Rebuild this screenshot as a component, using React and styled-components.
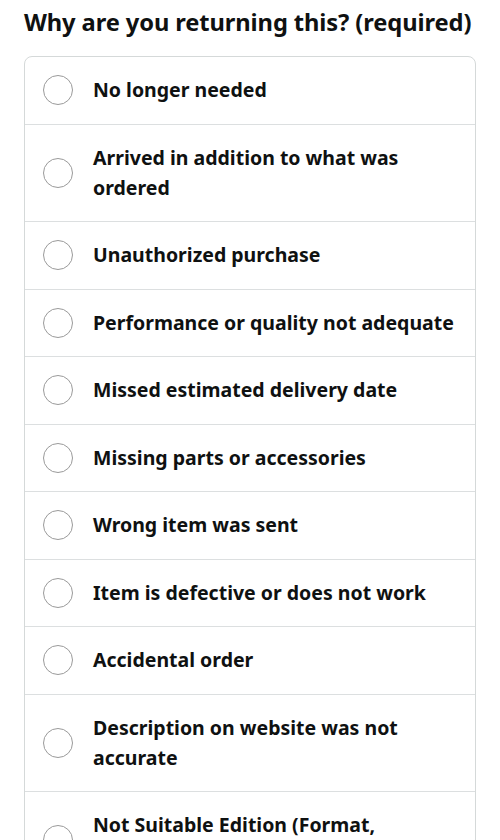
import React from 'react';
import styled, { createGlobalStyle } from 'styled-components';

const reasons = [
  'No longer needed',
  'Arrived in addition to what was ordered',
  'Unauthorized purchase',
  'Performance or quality not adequate',
  'Missed estimated delivery date',
  'Missing parts or accessories',
  'Wrong item was sent',
  'Item is defective or does not work',
  'Accidental order',
  'Description on website was not accurate',
  'Not Suitable Edition (Format, Language, etc.)',
];

const App = () => {
  return (
    <Page>
      <GlobalStyle />
      <Heading>Why are you returning this? (required)</Heading>
      <Card>
        {reasons.map(text => (
          <Row key={text}>
            <Radio />
            <Label>{text}</Label>
          </Row>
        ))}
      </Card>
    </Page>
  );
};

export default App;

const GlobalStyle = createGlobalStyle`
  body {
    margin: 0;
    background: #ffffff;
    font-family: "Noto Sans", "Open Sans", sans-serif;
    color: #0f1111;
  }
`;

const Page = styled.div`
  padding: 6px 24px 0 24px;
`;

const Heading = styled.h1`
  margin: 0 0 18px 0;
  font-size: 23.7px;
  line-height: 32px;
  font-weight: 700;
  white-space: nowrap;
  letter-spacing: -0.1px;
`;

const Card = styled.div`
  border: 1px solid #d5d9d9;
  border-radius: 8px;
  width: 452px;
  box-sizing: border-box;
  overflow: hidden;
`;

const Row = styled.div`
  display: flex;
  align-items: center;
  padding: 18.25px 16px 18.25px 18px;
  border-bottom: 1px solid #dcdfe0;

  &:last-child {
    border-bottom: none;
  }
`;

const Radio = styled.span`
  flex: 0 0 auto;
  width: 30px;
  height: 30px;
  box-sizing: border-box;
  border: 1.5px solid #9a9a9a;
  border-radius: 50%;
  margin-right: 20px;
`;

const Label = styled.span`
  font-size: 19.5px;
  line-height: 30px;
  font-weight: 700;
`;
